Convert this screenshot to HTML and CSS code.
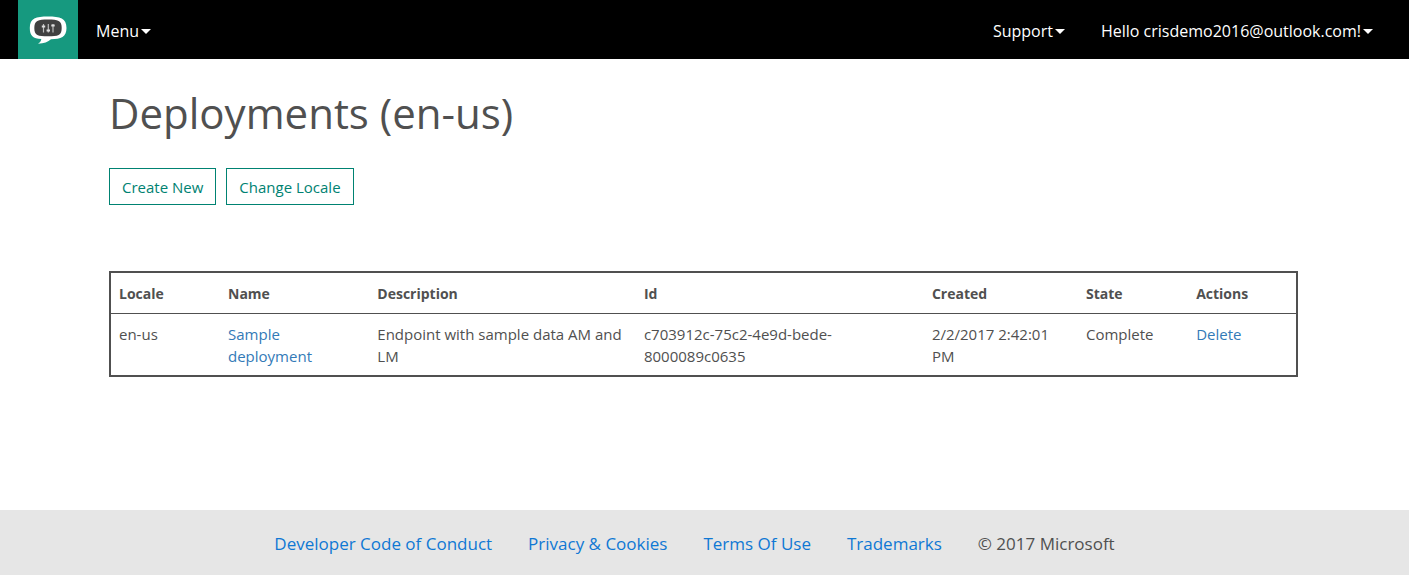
FILE: index.html
```html
<!DOCTYPE html>
<html lang="en">
<head>
<meta charset="utf-8">
<title>Deployments (en-us)</title>
<link rel="stylesheet" href="styles.css">
</head>
<body>
<header class="navbar">
  <a class="brand" href="#" aria-label="Home">
    <svg class="brand-icon" viewBox="0 0 60 59" aria-hidden="true">
      <path fill="#fff" d="M30 16.500C42 16.500 48.500 18 48.500 28C48.500 37 43 39 33 39.300C30 42 26 43.500 20 43.800C22 42.500 23 41 23.300 39C15 38.500 11.800 36 11.800 28C11.800 18 18 16.500 30 16.500Z"/>
      <path fill="#404040" d="M30 19.500C40 19.500 43.700 20.500 43.700 28C43.700 35.500 40 36.300 30 36.300C20 36.300 16.300 35.500 16.300 28C16.300 20.500 20 19.500 30 19.500Z"/>
      <path stroke="#bbb" stroke-width="1.200" d="M25.500 24V32.500M30.300 24V32.500M35 24V32.500"/>
      <path stroke="#ddd" stroke-width="1.800" d="M23.800 26.500H27.200M28.600 30.500H32M33.300 25.500H36.700"/>
    </svg>
  </a>
  <nav class="nav">
    <button class="nav-item" type="button">Menu<span class="caret"></span></button>
    <div class="nav-right">
      <button class="nav-item" type="button">Support<span class="caret"></span></button>
      <button class="nav-item" type="button">Hello crisdemo2016@outlook.com!<span class="caret"></span></button>
    </div>
  </nav>
</header>
<main class="content">
  <h1 class="title">Deployments (en-us)</h1>
  <div class="actions">
    <button class="btn" type="button">Create New</button>
    <button class="btn" type="button">Change Locale</button>
  </div>
  <table class="grid">
    <colgroup>
      <col class="col-locale"><col class="col-name"><col class="col-description"><col class="col-id"><col class="col-created"><col class="col-state"><col class="col-actions">
    </colgroup>
    <thead>
      <tr><th>Locale</th><th>Name</th><th>Description</th><th>Id</th><th>Created</th><th>State</th><th>Actions</th></tr>
    </thead>
    <tbody>
      <tr>
        <td>en-us</td>
        <td><a href="#">Sample deployment</a></td>
        <td>Endpoint with sample data AM and LM</td>
        <td>c703912c-75c2-4e9d-bede-8000089c0635</td>
        <td>2/2/2017 2:42:01 PM</td>
        <td>Complete</td>
        <td><a href="#">Delete</a></td>
      </tr>
    </tbody>
  </table>
</main>
<footer class="footer">
  <a href="#">Developer Code of Conduct</a>
  <a href="#">Privacy &amp; Cookies</a>
  <a href="#">Terms Of Use</a>
  <a href="#">Trademarks</a>
  <span>© 2017 Microsoft</span>
</footer>
</body>
</html>
```
FILE: styles.css
```css
* { box-sizing: border-box; }

body {
  margin: 0;
  min-height: 100vh;
  display: flex;
  flex-direction: column;
  background: #fff;
  color: #505050;
  font-family: "Segoe UI", "Open Sans", "Noto Sans", sans-serif;
  font-size: 15px;
  line-height: 22px;
}

a { color: #337ab7; text-decoration: none; }
button { font-family: inherit; cursor: pointer; }

.navbar {
  display: flex;
  background: #000;
  padding: 0 36px 0 18px;
}
.brand {
  flex: none;
  width: 60px;
  height: 59px;
  background: #16997f;
}
.brand-icon { display: block; width: 60px; height: 59px; }
.nav {
  flex: 1;
  display: flex;
  justify-content: space-between;
  align-items: center;
  padding: 2px 0 0 18px;
}
.nav-right { display: flex; gap: 36px; }
.nav-item {
  display: flex;
  align-items: center;
  gap: 2px;
  padding: 0;
  border: 0;
  background: none;
  color: #fff;
  font-size: 16px;
  line-height: 24px;
}
.caret {
  margin-top: 2px;
  border-top: 5px solid #fff;
  border-left: 5px solid transparent;
  border-right: 5px solid transparent;
}

.content {
  flex: 1;
  padding: 27px 111px 48px 109px;
}
.title {
  margin: 0 0 28px;
  font-size: 42px;
  font-weight: 400;
  line-height: 54px;
}
.actions { display: flex; gap: 10px; margin-bottom: 66px; }
.btn {
  padding: 8px 12px 6px;
  border: 1px solid #008272;
  background: #fff;
  color: #008272;
  font-size: 15px;
  line-height: 21px;
}

.grid {
  width: 100%;
  table-layout: fixed;
  border-spacing: 0;
  border: 2px solid #505050;
}
.grid th, .grid td {
  padding: 9px 8px 8px;
  text-align: left;
  vertical-align: top;
}
.grid th {
  padding-top: 10px;
  border-bottom: 1px solid #505050;
  font-size: 14px;
  font-weight: 700;
}
.col-locale { width: 9.2%; }
.col-name { width: 12.6%; }
.col-description { width: 22.5%; }
.col-id { width: 24.3%; }
.col-created { width: 13%; }
.col-state { width: 9.3%; }
.col-actions { width: 9.1%; }

.footer {
  display: flex;
  justify-content: center;
  gap: 36px;
  padding: 21px 20px 18px 0;
  background: #e6e6e6;
  font-size: 17px;
  line-height: 26px;
}
.footer a { color: #0f78d4; }
```
